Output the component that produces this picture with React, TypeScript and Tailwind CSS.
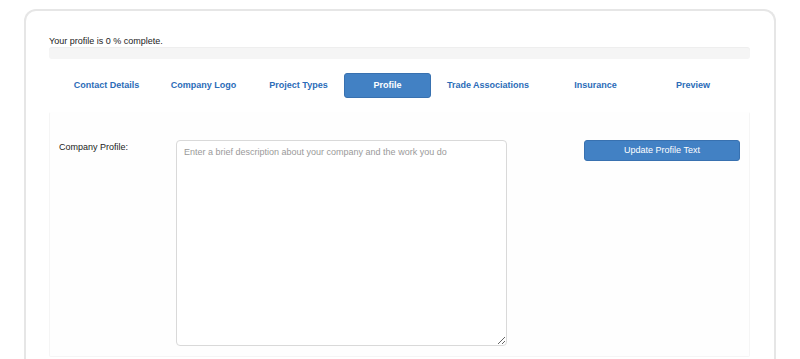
const tabs = [
  { label: 'Contact Details', w: 'w-[95px]' },
  { label: 'Company Logo', w: 'w-[99px]' },
  { label: 'Project Types', w: 'w-[91px]' },
  { label: 'Profile', w: 'w-[87px]', active: true },
  { label: 'Trade Associations', w: 'w-[114px]' },
  { label: 'Insurance', w: 'w-[101px]' },
  { label: 'Preview', w: 'w-[94px]' },
]

export default function App() {
  const complete = 0

  return (
    <div className="w-full h-[359px] overflow-hidden bg-white pt-[9px] px-[24px] font-['Liberation_Sans',Arial,sans-serif]">
      <div className="h-[400px] border-2 border-b-0 border-[#e6e6e6] rounded-t-[12px] pt-[25px] pl-[23px] pr-[24px]">
        {/* Progress */}
        <p className="text-[9px] leading-[11px] text-[#222]">Your profile is {complete} % complete.</p>
        <div className="h-[12px] rounded-[3px] bg-[#f5f5f5] shadow-[inset_0_1px_1px_rgba(0,0,0,0.03)]">
          <div className="h-full rounded-[3px] bg-[#4281c4]" style={{ width: `${complete}%` }} />
        </div>

        {/* Tabs */}
        <nav className="flex mt-[14px] px-[10px]">
          {tabs.map((t) => (
            <a
              key={t.label}
              className={`${t.w} h-[25px] pt-[1px] flex items-center justify-center text-[9px] font-bold rounded-[3px] ${
                t.active
                  ? 'bg-[#4281c4] border border-[#3871b0] text-white'
                  : 'text-[#2b6cb8]'
              }`}
            >
              {t.label}
            </a>
          ))}
        </nav>

        {/* Profile panel */}
        <div className="mt-[14px] bg-[#fefefe] border border-t-transparent border-[#f5f5f5] rounded-[2px] pt-[27px] pb-[10px] px-[9px]">
          <div className="flex items-start">
            <label className="w-[117px] pt-[2px] text-[9px] leading-[11px] text-[#222]">Company Profile:</label>
            <textarea
              className="w-[331px] h-[206px] border border-[#d9d9d9] rounded-[4px] bg-white px-[7px] py-[6px] text-[9px] leading-[11px] text-[#333] placeholder:text-[#9a9a9a] outline-none"
              placeholder="Enter a brief description about your company and the work you do"
            />
            <button className="ml-auto w-[156px] h-[21px] rounded-[3px] bg-[#4281c4] border border-[#3871b0] text-white text-[9px]">
              Update Profile Text
            </button>
          </div>
        </div>
      </div>
    </div>
  )
}
